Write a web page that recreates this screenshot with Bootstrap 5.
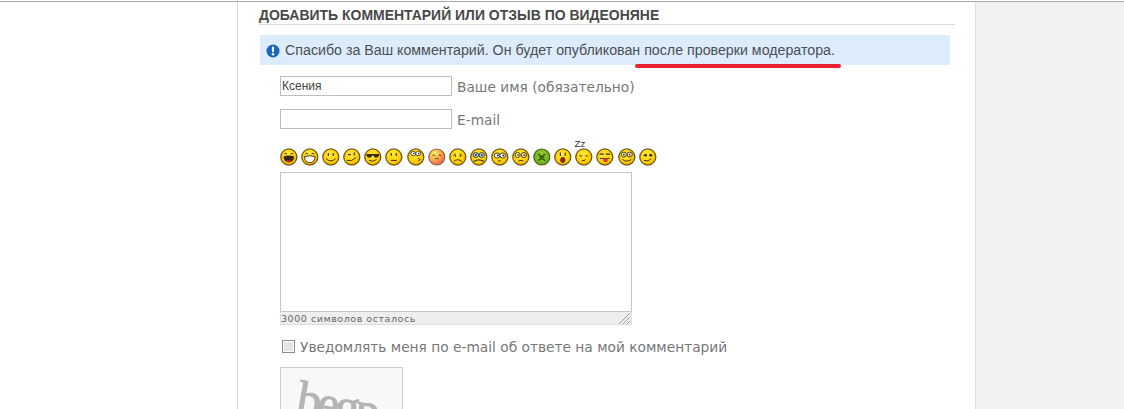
<!DOCTYPE html>
<html lang="ru">
<head>
    <meta charset="UTF-8">
    <meta name="viewport" content="width=device-width, initial-scale=1.0">
    <title>Добавить комментарий</title>
    <link href="https://cdn.jsdelivr.net/npm/bootstrap@5.3.0/dist/css/bootstrap.min.css" rel="stylesheet">
    <style>
        html, body { height: 409px; overflow: hidden; }
        body { background: #fff; padding-top: 1px; font-family: "Liberation Sans", Arial, sans-serif; }
        .page-wrap { border-top: 1px solid #a9a9a9; height: 408px; }
        .page-left { width: 237px; }
        .page-main { width: 739px; padding: 0 20px 0 21px; border-left: 1px solid #d5d6d8; border-right: 1px solid #e1e2e4; overflow: hidden; }
        .page-side { background: #f0f1f3; }
        .sect-title { margin: 0; padding: 5px 0 1px; height: 23px; font-size: 13.97px; line-height: 16px; font-weight: 700; text-transform: uppercase; color: #484848; border-bottom: 1px solid #d9d9d9; }
        .note-box { position: relative; width: 690px; height: 30px; margin: 10px 0 11px 1px; padding: 1px 0 0 6px; background: #ddecfb; color: #4b4f53; font-size: 14.23px; }
        .note-box svg { flex: none; margin-right: 5px; }
        .red-mark { position: absolute; left: 375px; top: 29px; width: 206px; height: 4px; border-radius: 2px; background: #e8202f; }
        .form-area { padding-left: 21px; }
        .text-in { width: 172px; height: 20px; padding: 0 1px; border: 1px solid #bdbdbd; font-size: 12px; color: #444; font-family: "Liberation Sans", Arial, sans-serif; border-radius: 0; outline: 0; }
        .in-label { margin-left: 5px; padding-top: 3px; color: #777; font-size: 13.75px; font-family: "DejaVu Sans", Verdana, sans-serif; }
        .field-row { height: 20px; margin-bottom: 13px; }
        .smile-row { gap: 3.5px; height: 18px; margin-top: 19px; margin-bottom: 6px; }
        .smile-row svg { width: 17.6px; height: 18px; flex: none; overflow: visible; }
        .msg-wrap { width: 352px; }
        .msg-wrap textarea { display: block; width: 352px; height: 139px; border: 1px solid #c6c6c6; border-bottom: 0; resize: none; outline: 0; }
        .count-bar { position: relative; height: 14px; background: #eee; border: 1px solid #dedede; border-top: 1px solid #c6c6c6; color: #666; font-size: 9.5px; line-height: 13px; letter-spacing: .55px; font-family: "DejaVu Sans", Verdana, sans-serif; }
        .grip { position: absolute; right: 1px; bottom: 0; }
        .notify-row { margin-top: 14px; height: 14px; color: #777; font-size: 13.75px; font-family: "DejaVu Sans", Verdana, sans-serif; }
        .notify-row span { padding-top: 3px; }
        .fake-check { width: 13px; height: 13px; margin: 0 5px 0 2px; border: 1px solid #8c8c8c; background: #e4e4e4; box-shadow: inset 0 0 0 1px #fff; flex: none; appearance: none; border-radius: 0; }
        .captcha-box { width: 123px; height: 60px; margin-top: 14px; border: 1px solid #ccc; overflow: hidden; background: #f8f8f8; }
        .captcha-word { display: block; margin: 5px 0 0 21px; color: #b4b4b4; font-size: 50px; line-height: 50px; letter-spacing: -4px; font-family: "Liberation Serif", serif; -webkit-text-stroke: 1px #b4b4b4; transform: rotate(10deg) scaleX(.98); transform-origin: left top; }
    </style>
</head>
<body>
    <svg width="0" height="0" class="position-absolute">
        <defs>
            <radialGradient id="ball" cx="45%" cy="35%" r="70%">
                <stop offset="0" stop-color="#ffeb3c"/>
                <stop offset=".65" stop-color="#fed004"/>
                <stop offset="1" stop-color="#eba800"/>
            </radialGradient>
            <radialGradient id="ballred" cx="35%" cy="30%" r="80%">
                <stop offset="0" stop-color="#fff06a"/>
                <stop offset=".5" stop-color="#fda94a"/>
                <stop offset="1" stop-color="#f04a58"/>
            </radialGradient>
            <radialGradient id="ballgreen" cx="50%" cy="40%" r="65%">
                <stop offset="0" stop-color="#a8dc2e"/>
                <stop offset="1" stop-color="#58a012"/>
            </radialGradient>
            <circle id="rim" cx="9" cy="9" r="8.2" fill="url(#ball)" stroke="#6f5410" stroke-width="1.3"/>
        </defs>
    </svg>

    <div class="page-wrap d-flex">
    <div class="page-left flex-shrink-0"></div>
    <div class="page-main flex-shrink-0">
        <h2 class="sect-title">Добавить комментарий или отзыв по видеоняне</h2>
        <div class="note-box d-flex align-items-center">
            <svg width="14" height="14" viewBox="0 0 14 14"><circle cx="7" cy="7" r="6.5" fill="#1a66b8"/><rect x="5.9" y="2.6" width="2.2" height="5.6" rx="1" fill="#fff"/><circle cx="7" cy="10.2" r="1.25" fill="#fff"/></svg>
            <span>Спасибо за Ваш комментарий. Он будет опубликован после проверки модератора.</span>
            <div class="red-mark"></div>
        </div>

        <form class="form-area">
            <div class="field-row d-flex align-items-center">
                <input type="text" class="text-in" value="Ксения">
                <label class="in-label">Ваше имя (обязательно)</label>
            </div>
            <div class="field-row d-flex align-items-center">
                <input type="text" class="text-in">
                <label class="in-label">E-mail</label>
            </div>

            <div class="smile-row d-flex">
                <svg viewBox="0 0 18 18"><use href="#rim"/><path d="M3.5 8.5Q9 6.5 14.5 8.5Q14 14.5 9 14.5T3.5 8.5Z" fill="#3a2408"/><path d="M6 12.6h6v1.4H6Z" fill="#d8382c"/><path d="M4.5 6Q5.8 4.5 7.2 6M10.8 6Q12.2 4.5 13.5 6" fill="none" stroke="#3a2408" stroke-width="1"/></svg>
                <svg viewBox="0 0 18 18"><use href="#rim"/><path d="M3.5 8.5Q9 7 14.5 8.5Q14 14.8 9 14.8T3.5 8.5Z" fill="#fff" stroke="#3a2408" stroke-width=".9"/><path d="M4.5 6Q5.8 4.5 7.2 6M10.8 6Q12.2 4.5 13.5 6" fill="none" stroke="#3a2408" stroke-width="1"/></svg>
                <svg viewBox="0 0 18 18"><use href="#rim"/><path d="M4 10.5Q9 15.5 14 10.5" fill="none" stroke="#4a3208" stroke-width="1"/><path d="M6.5 5v3M11.5 5v3" stroke="#4a3208" stroke-width="1.2"/></svg>
                <svg viewBox="0 0 18 18"><use href="#rim"/><path d="M4 12.5Q9 14 13.5 9.5" fill="none" stroke="#4a3208" stroke-width="1"/><path d="M5 6.5h3M11.5 4.5v3" stroke="#4a3208" stroke-width="1.2"/></svg>
                <svg viewBox="0 0 18 18"><use href="#rim"/><path d="M2.5 6H15.5V7.5L14 9.5H11L9.5 7.5H8.5L7 9.5H4L2.5 7.5Z" fill="#3a2a10"/><path d="M5 12.5Q9 14.5 13 11.5" fill="none" stroke="#4a3208" stroke-width="1"/></svg>
                <svg viewBox="0 0 18 18"><use href="#rim"/><path d="M6 12.5H12" stroke="#4a3208" stroke-width="1.1"/><path d="M6.5 5v3M11.5 5v3" stroke="#4a3208" stroke-width="1.2"/></svg>
                <svg viewBox="0 0 18 18"><use href="#rim"/><ellipse cx="6.5" cy="5.5" rx="2.6" ry="2.2" fill="#fff" stroke="#3a2408" stroke-width=".8"/><ellipse cx="11.5" cy="5.5" rx="2.6" ry="2.2" fill="#fff" stroke="#3a2408" stroke-width=".8"/><circle cx="7" cy="5.5" r=".8" fill="#222"/><circle cx="12" cy="5.5" r=".8" fill="#222"/><path d="M11.5 10.5l2 1.2-2 1.2" fill="none" stroke="#4a3208" stroke-width="1"/></svg>
                <svg viewBox="0 0 18 18"><circle cx="9" cy="9" r="8.2" fill="url(#ballred)" stroke="#8a6a40" stroke-width="1.2"/><path d="M4.5 8Q6 5.5 7.5 8M10.5 8Q12 5.5 13.5 8" fill="none" stroke="#5a3a18" stroke-width="1"/><path d="M7 11Q9 9.8 11 11" fill="none" stroke="#5a3a18" stroke-width="1"/></svg>
                <svg viewBox="0 0 18 18"><use href="#rim"/><path d="M4.5 7.5L7 5.5M13.5 7.5L11 5.5" stroke="#4a3208" stroke-width="1"/><path d="M6.5 7v2M11.5 7v2" stroke="#4a3208" stroke-width="1"/><path d="M5 13.5Q9 10 13 13.5" fill="none" stroke="#4a3208" stroke-width="1"/></svg>
                <svg viewBox="0 0 18 18"><use href="#rim"/><ellipse cx="6" cy="7" rx="2.8" ry="2.5" fill="#cde" stroke="#2c3a30" stroke-width="1"/><ellipse cx="12" cy="7" rx="2.8" ry="2.5" fill="#cde" stroke="#2c3a30" stroke-width="1"/><circle cx="6" cy="7" r="1" fill="#222"/><circle cx="12" cy="7" r="1" fill="#222"/><path d="M4 13.5Q9 10.5 14 13.5" fill="none" stroke="#3a3a20" stroke-width="1.3"/></svg>
                <svg viewBox="0 0 18 18"><use href="#rim"/><ellipse cx="6.3" cy="7.5" rx="3" ry="2.6" fill="#fff" stroke="#3a2408" stroke-width=".9"/><ellipse cx="12" cy="7.5" rx="3" ry="2.6" fill="#fff" stroke="#3a2408" stroke-width=".9"/><circle cx="7" cy="7.5" r="1" fill="#222"/><circle cx="12.7" cy="7.5" r="1" fill="#222"/><path d="M7 13H10" stroke="#4a3208" stroke-width="1"/></svg>
                <svg viewBox="0 0 18 18"><use href="#rim"/><circle cx="5.8" cy="7" r="2.6" fill="#fff3a8" stroke="#3a2408" stroke-width=".9"/><circle cx="12.2" cy="7" r="2.6" fill="#fff3a8" stroke="#3a2408" stroke-width=".9"/><circle cx="6.2" cy="7" r=".9" fill="#222"/><circle cx="12.6" cy="7" r=".9" fill="#222"/><path d="M6.5 13.2Q9 12 11.5 12.8" fill="none" stroke="#4a3208" stroke-width="1"/></svg>
                <svg viewBox="0 0 18 18"><circle cx="9" cy="9" r="8.2" fill="url(#ballgreen)" stroke="#4e5a14" stroke-width="1.2"/><path d="M5 7L7.5 6M13 7L10.5 6" stroke="#24400c" stroke-width="1.1"/><ellipse cx="9" cy="8.5" rx="3" ry="1.6" fill="#2f5a10"/><path d="M6 13Q6.5 10.5 9 11Q11.5 10.5 12 13" fill="none" stroke="#24400c" stroke-width="1.1"/></svg>
                <svg viewBox="0 0 18 18"><use href="#rim"/><path d="M6.5 4.5v3.5M11.5 4.5v3.5" stroke="#4a3208" stroke-width="1.2"/><ellipse cx="9" cy="12" rx="2.2" ry="2.8" fill="#9a2410" stroke="#3a2408" stroke-width=".7"/></svg>
                <svg viewBox="0 0 18 18"><use href="#rim"/><path d="M4.5 7.5Q6 8.8 7.5 7.5M10.5 7.5Q12 8.8 13.5 7.5" fill="none" stroke="#4a3208" stroke-width="1"/><path d="M7 12.5Q9.5 13.5 11 11.5" fill="none" stroke="#4a3208" stroke-width="1"/><text x="-.5" y="-1.5" font-size="10" font-family="Liberation Sans, sans-serif" fill="#333">Zz</text></svg>
                <svg viewBox="0 0 18 18"><use href="#rim"/><path d="M3.5 6.5Q6 5 8 6.5M10 6.5Q12 5 14.5 6.5" fill="none" stroke="#4a3208" stroke-width="1.2"/><path d="M4 10.5H14" stroke="#4a3208" stroke-width="1"/><path d="M7.5 10.5H12V13Q9.8 15.5 7.5 13Z" fill="#e23a1c"/></svg>
                <svg viewBox="0 0 18 18"><use href="#rim"/><ellipse cx="6" cy="6.5" rx="2.7" ry="2.5" fill="#fbf0b0" stroke="#3a2408" stroke-width=".9"/><ellipse cx="12" cy="6.5" rx="2.7" ry="2.5" fill="#fbf0b0" stroke="#3a2408" stroke-width=".9"/><circle cx="6" cy="6.5" r=".9" fill="#222"/><circle cx="12" cy="6.5" r=".9" fill="#222"/><path d="M4.5 11.5Q9 15 13.5 11.5" fill="none" stroke="#4a3208" stroke-width="1"/></svg>
                <svg viewBox="0 0 18 18"><use href="#rim"/><path d="M5 8Q6.5 5.5 8 7.5M10.5 7.5Q12 5.5 13.5 8" fill="none" stroke="#3a2408" stroke-width="1.2"/><circle cx="7" cy="7.6" r=".9" fill="#222"/><circle cx="12" cy="7.6" r=".9" fill="#222"/><path d="M5 12.5Q9 14 12.5 11" fill="none" stroke="#4a3208" stroke-width="1"/></svg>
            </div>

            <div class="msg-wrap">
                <textarea></textarea>
                <div class="count-bar">3000 символов осталось
                    <svg class="grip" width="12" height="12" viewBox="0 0 12 12"><path d="M1 12L12 1M5 12L12 5M9 12L12 9" stroke="#9a9a9a" stroke-width="1"/></svg>
                </div>
            </div>

            <div class="notify-row d-flex align-items-center">
                <input type="checkbox" class="fake-check">
                <span>Уведомлять меня по e-mail об ответе на мой комментарий</span>
            </div>

            <div class="captcha-box"><span class="captcha-word">begp</span></div>
        </form>
    </div>
    <div class="page-side flex-grow-1"></div>
    </div>

    <script src="https://cdn.jsdelivr.net/npm/bootstrap@5.3.0/dist/js/bootstrap.bundle.min.js"></script>
</body>
</html>
